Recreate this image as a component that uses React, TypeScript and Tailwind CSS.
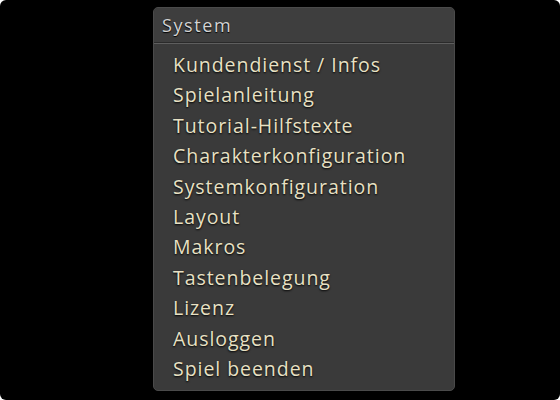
import React from "react";

const items = [
  "Kundendienst / Infos",
  "Spielanleitung",
  "Tutorial-Hilfstexte",
  "Charakterkonfiguration",
  "Systemkonfiguration",
  "Layout",
  "Makros",
  "Tastenbelegung",
  "Lizenz",
  "Ausloggen",
  "Spiel beenden",
];

export default function App() {
  return (
    <div className="w-[560px] h-[400px] bg-white">
      <div
        className="w-[560px] h-[400px] bg-black rounded-[6px] pt-[7px] pl-[153px]"
        style={{ fontFamily: '"Open Sans", "Noto Sans", sans-serif' }}
      >
        <div className="w-[302px] h-[384px] rounded-[5px] bg-[#3a3a3a] border border-[#4a4a4a] flex flex-col overflow-hidden">
          <div className="h-[35px] flex items-center pl-[8px] pt-[1px] bg-[#3e3e3e] border-b border-[#2a2a2a]">
            <span className="text-[18px] font-medium tracking-[1.6px] text-[#d4d4d4] [text-shadow:0_1px_1px_#000]">System</span>
          </div>
          <div className="h-[1px] bg-[#5e5e5e]" />
          <div className="flex flex-col pl-[19px] pt-[6px]">
            {items.map((t) => (
              <div
                key={t}
                className="h-[30.4px] leading-[30.4px] text-[19.5px] font-medium tracking-[0.95px] text-[#e8e1c4] [text-shadow:0_1px_2px_#000]"
              >
                {t}
              </div>
            ))}
          </div>
        </div>
      </div>
    </div>
  );
}
